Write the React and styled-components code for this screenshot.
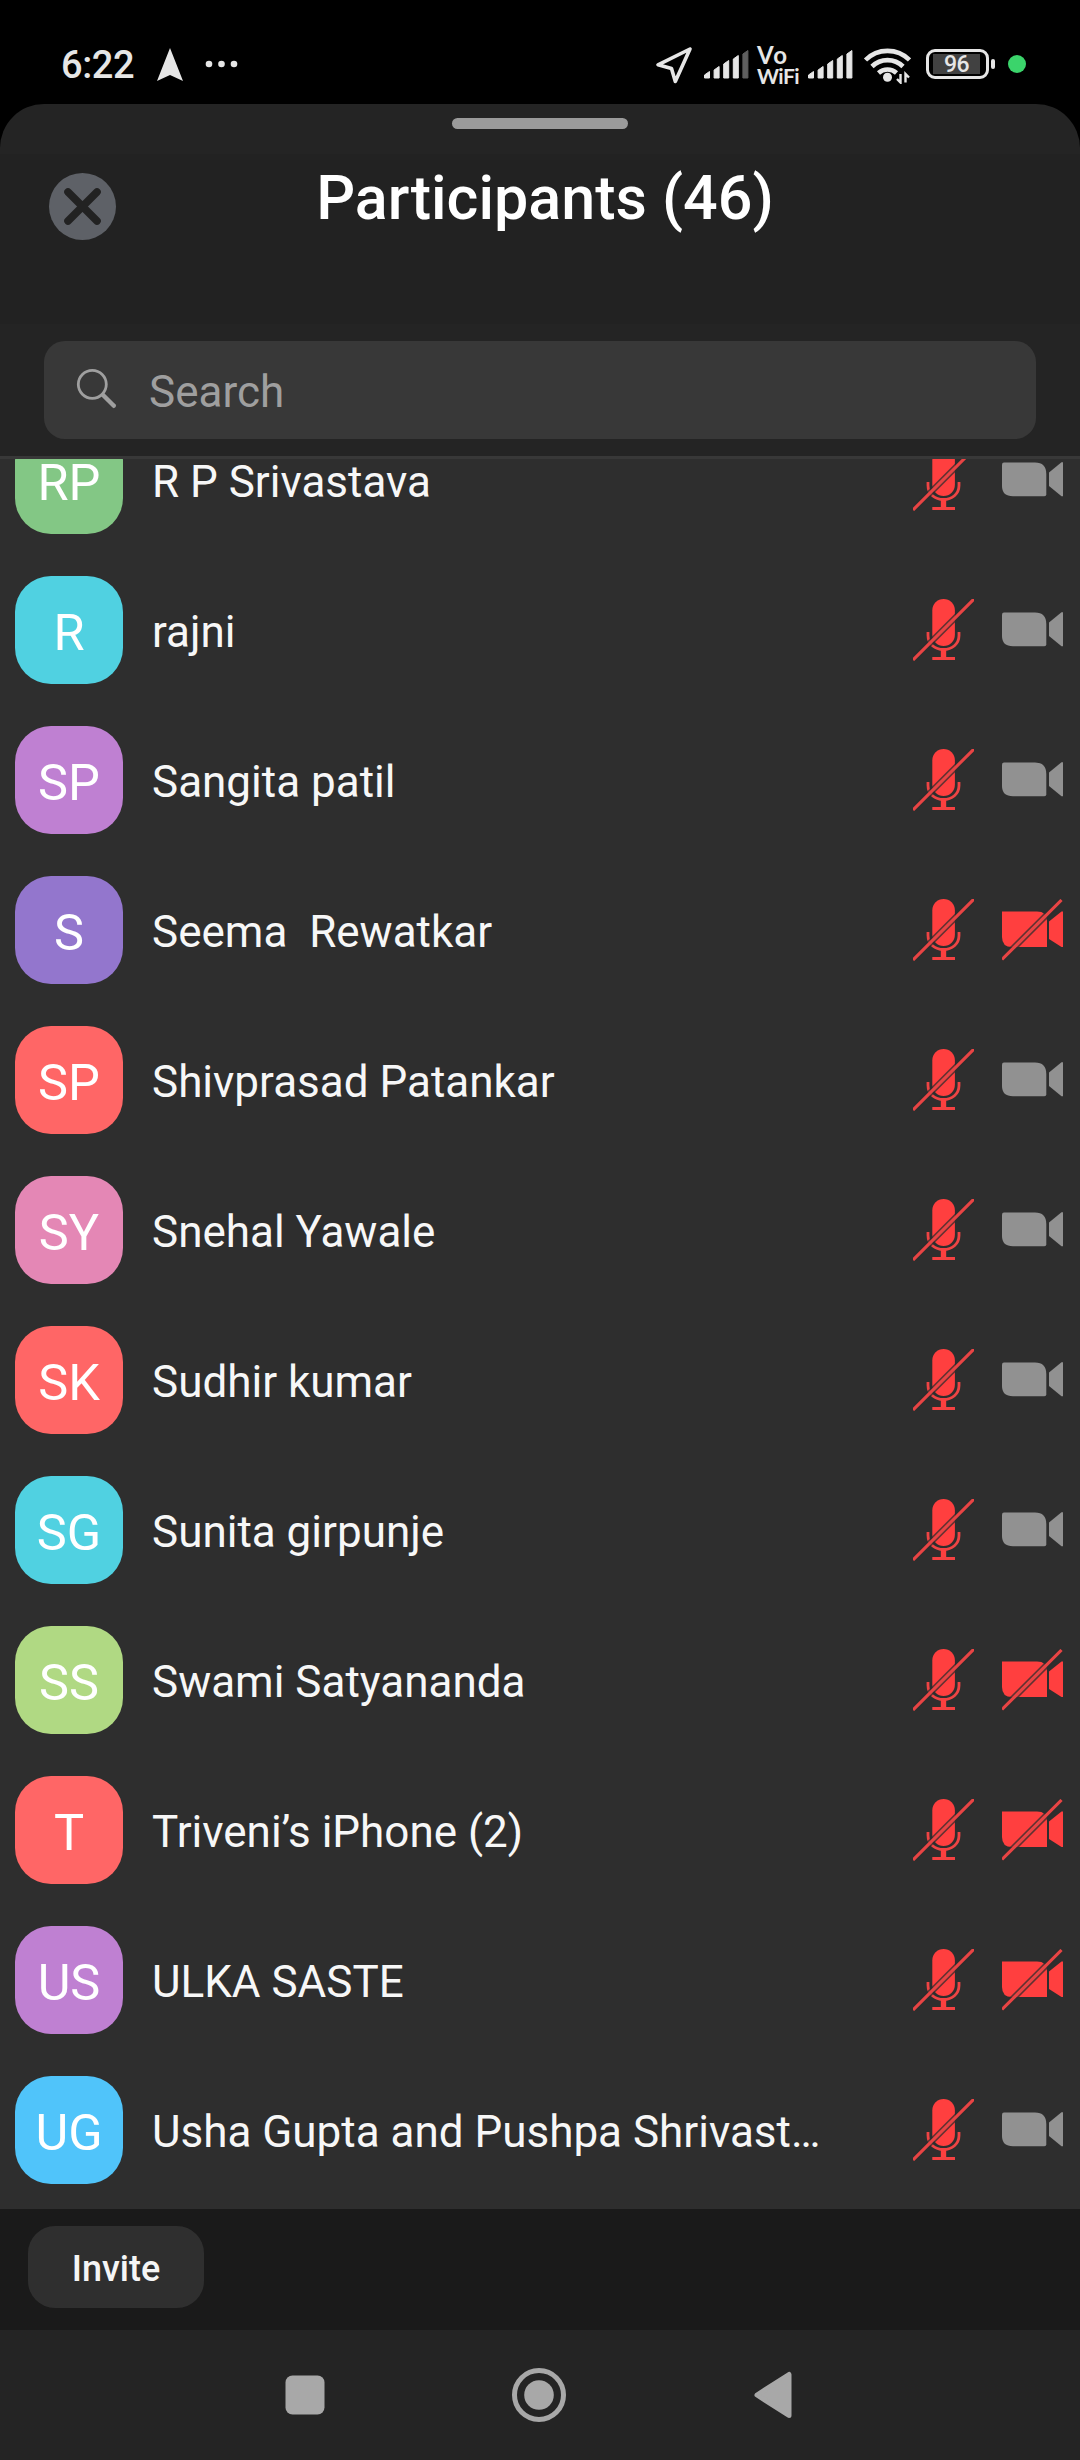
import React from "react";
import styled, { createGlobalStyle } from "styled-components";

const Global = createGlobalStyle`
  * { box-sizing: border-box; }
  html, body { margin: 0; padding: 0; background: #000; }
  body { font-family: Roboto, "Noto Sans", sans-serif; width: 1080px; }
`;

const Screen = styled.div`
  width: 1080px;
  height: 2460px;
  display: flex;
  flex-direction: column;
  overflow: hidden;
  background: #000;
`;

const StatusBar = styled.div`
  height: 104px;
  flex: none;
  display: flex;
  justify-content: space-between;
  padding: 44px 54px 0 61px;
  color: #e6e6e6;
`;

const StatusGroup = styled.div`
  display: flex;
  height: 40px;
  align-items: flex-start;
`;

const Clock = styled.span`
  font-size: 38px;
  line-height: 42px;
  font-weight: 500;
  letter-spacing: -0.4px;
  width: 96px;
`;

const StatusIcon = styled.svg`
  display: block;
  flex: none;
  margin-left: ${(p) => p.$gap || 0}px;
  margin-top: ${(p) => p.$drop || 0}px;
`;

const VoWifi = styled.div`
  display: flex;
  flex-direction: column;
  width: 43px;
  margin-left: 8px;
  font-family: Lato, Roboto, sans-serif;
  font-weight: 700;
`;

const VoWifiLine = styled.span`
  font-size: ${(p) => p.$size}px;
  line-height: 21px;
  letter-spacing: ${(p) => p.$tracking}px;
`;

const Battery = styled.div`
  width: 63px;
  height: 30px;
  margin: 5px 0 0 15px;
  padding: 2px;
  border: 3px solid #e6e6e6;
  border-radius: 9px;
  display: flex;
`;

const Charge = styled.div`
  width: 47px;
  margin-left: 2px;
  background: #414141;
  display: flex;
  align-items: center;
  justify-content: center;
  font-size: 23px;
  font-weight: 500;
  letter-spacing: -0.5px;
  line-height: 20px;
  padding: 2px 0 0 0;
`;

const BatteryTip = styled.div`
  width: 4px;
  height: 10px;
  margin: 15px 0 0 2px;
  border-radius: 2px;
  background: #e6e6e6;
`;

const PrivacyDot = styled.div`
  width: 18px;
  height: 18px;
  margin: 11px 0 0 13px;
  border-radius: 50%;
  background: #3bd46b;
`;

const Sheet = styled.section`
  flex: 1;
  min-height: 0;
  display: flex;
  flex-direction: column;
  border-radius: 44px 44px 0 0;
  overflow: hidden;
  background: #242424;
`;

const GrabArea = styled.div`
  height: 50px;
  flex: none;
  display: flex;
  justify-content: center;
  padding-top: 14px;
`;

const Grabber = styled.div`
  width: 176px;
  height: 11px;
  border-radius: 6px;
  background: #9b9b9b;
`;

const TitleBar = styled.header`
  height: 170px;
  flex: none;
  display: grid;
  grid-template-columns: 116px 1fr 116px;
  padding: 0 0 0 49px;
  background: #222222;
`;

const CloseButton = styled.button`
  width: 67px;
  height: 67px;
  margin: 19px 0 0;
  padding: 0;
  border: 0;
  background: none;
`;

const Title = styled.h1`
  margin: 8px 0 0;
  padding-right: 39px;
  text-align: center;
  font-size: 61px;
  line-height: 72px;
  font-weight: 500;
  color: #fff;
  white-space: nowrap;
`;

const SearchArea = styled.div`
  height: 135px;
  flex: none;
  padding: 17px 44px 0;
  border-bottom: 3px solid #383838;
`;

const SearchField = styled.div`
  height: 98px;
  display: flex;
  align-items: center;
  padding-left: 33px;
  border-radius: 21px;
  background: #383838;
  color: #9f9f9f;
  font-size: 44px;
`;

const SearchLabel = styled.span`
  padding: 4px 0 0 33px;
`;

const List = styled.ul`
  flex: 1;
  min-height: 0;
  margin: 0;
  padding: 0;
  list-style: none;
  overflow: hidden;
  background: #2e2e2e;

  & > li:first-child { margin-top: -54px; }
`;

const Row = styled.li`
  height: 150px;
  display: flex;
  align-items: center;
  padding: 0 17px 0 15px;
`;

const Avatar = styled.div`
  width: 108px;
  height: 108px;
  flex: none;
  display: flex;
  align-items: center;
  justify-content: center;
  padding: 5px 0 0 0;
  border-radius: 36px;
  background: ${(p) => p.$color};
  color: #fff;
  font-size: 50.5px;
`;

const Name = styled.span`
  flex: none;
  width: 700px;
  margin-left: 29px;
  padding-top: 3px;
  margin-right: 61px;
  font-size: 44px;
  line-height: 54px;
  color: #f7f7f7;
  white-space: pre;
`;

const RowIcon = styled.svg`
  display: block;
  flex: none;
  margin-right: ${(p) => p.$after || 0}px;
`;

const Footer = styled.footer`
  height: 121px;
  flex: none;
  padding: 17px 28px;
  background: #1a1a1a;
`;

const InviteButton = styled.button`
  width: 176px;
  height: 82px;
  padding: 3px 0 0;
  border: 0;
  border-radius: 27px;
  background: #2f2f2f;
  color: #f5f5f5;
  font: 500 36px Roboto, sans-serif;
`;

const NavBar = styled.nav`
  height: 130px;
  flex: none;
  display: flex;
  align-items: center;
  justify-content: space-between;
  padding: 0 280px 0 278px;
  background: #242424;
`;

const Glyph = styled.svg`
  display: block;
  overflow: visible;
`;

function Signal({ gap, drop, dimLast }) {
  const heights = [7, 12, 18, 23, 28];
  return (
    <StatusIcon $gap={gap} $drop={drop} width="45" height="29" viewBox="0 0 45 29">
      {heights.map((h, i) => {
        const x = i * 9.6;
        return (
          <path
            key={i}
            d={`M${x + 0.5} ${29 - h + 3}L${x + 5.5} ${29 - h - 0.5}V28H${x + 0.5}Z`}
            fill={dimLast && i === 4 ? "#5f5f5f" : "#e6e6e6"}
            stroke={dimLast && i === 4 ? "#5f5f5f" : "#e6e6e6"}
            strokeWidth="1"
            strokeLinejoin="round"
          />
        );
      })}
    </StatusIcon>
  );
}

function MicOff() {
  return (
    <RowIcon $after={28} width="61" height="62" viewBox="0 0 61 62">
      <rect x="19.3" y="0" width="22.6" height="47" rx="11.3" fill="#ff3f3f" />
      <path d="M15 33V36.5C15 45 22 50.5 30.5 50.5S46 45 46 36.5V33" fill="none" stroke="#ee4444" strokeWidth="2.8" />
      <path d="M30.5 51V59" stroke="#ff3f3f" strokeWidth="5.4" />
      <path d="M19.3 59.5H42" stroke="#f54141" strokeWidth="3" />
      <path d="M0 61L61 0" stroke="#2e2e2e" strokeOpacity="0.75" strokeWidth="6.2" />
      <path d="M0 61L61 0" stroke="#e84444" strokeWidth="3.1" />
    </RowIcon>
  );
}

function CameraOn() {
  return (
    <RowIcon width="61" height="62" viewBox="0 0 61 62">
      <path d="M2 13.5H33Q44.3 13.5 44.3 25V45.2Q44.3 47.2 42.3 47.2H11Q0 47.2 0 37V15.5Q0 13.5 2 13.5Z" fill="#919191" />
      <path d="M47 23.5L59.5 13.2H61V47.2H59.5L47 37Z" fill="#919191" />
    </RowIcon>
  );
}

function CameraOff() {
  return (
    <RowIcon width="61" height="62" viewBox="0 0 61 62">
      <path d="M0 12.5H35Q45 12.5 45 22V48H10Q0 48 0 38Z" fill="#ff3f3f" />
      <path d="M47 22.5L59.5 12.5H61V48H59.5L47 40Z" fill="#ff3f3f" />
      <path d="M0 60.5L60.5 0" stroke="#2e2e2e" strokeOpacity="0.75" strokeWidth="6.2" />
      <path d="M0 60.5L59.5 1" stroke="#e84444" strokeWidth="3.1" />
    </RowIcon>
  );
}

const participants = [
  { initials: "RP", name: "R P Srivastava", color: "#83c785", camera: true },
  { initials: "R", name: "rajni", color: "#50d1e1", camera: true },
  { initials: "SP", name: "Sangita patil", color: "#bf80d2", camera: true },
  { initials: "S", name: "Seema  Rewatkar", color: "#9376cd", camera: false },
  { initials: "SP", name: "Shivprasad Patankar", color: "#ff6666", camera: true },
  { initials: "SY", name: "Snehal Yawale", color: "#e487b5", camera: true },
  { initials: "SK", name: "Sudhir kumar", color: "#ff6666", camera: true },
  { initials: "SG", name: "Sunita girpunje", color: "#50d1e1", camera: true },
  { initials: "SS", name: "Swami Satyananda", color: "#b0d983", camera: false },
  { initials: "T", name: "Triveni’s iPhone (2)", color: "#ff6666", camera: false },
  { initials: "US", name: "ULKA SASTE", color: "#bf80d2", camera: false },
  { initials: "UG", name: "Usha Gupta and Pushpa Shrivast…", color: "#50c4fa", camera: true },
];

export default function App() {
  return (
    <Screen>
      <Global />
      <StatusBar>
        <StatusGroup>
          <Clock>6:22</Clock>
          <StatusIcon $drop={4} width="26" height="33" viewBox="0 0 26 33">
            <path d="M13 0L26 33L13 27L0 33Z" fill="#e6e6e6" />
          </StatusIcon>
          <StatusIcon $gap={22} $drop={16} width="34" height="8" viewBox="0 0 34 8">
            <circle cx="4" cy="4" r="3.3" fill="#e6e6e6" />
            <circle cx="16.5" cy="4" r="3.3" fill="#e6e6e6" />
            <circle cx="29" cy="4" r="3.3" fill="#e6e6e6" />
          </StatusIcon>
        </StatusGroup>
        <StatusGroup>
          <StatusIcon $drop={2} width="38" height="39" viewBox="0 0 38 39">
            <path d="M35 3L3 18.8L16.5 22.5L20.3 35.5Z" fill="none" stroke="#e6e6e6" strokeWidth="3.6" strokeLinejoin="round" />
          </StatusIcon>
          <Signal gap={11} drop={6} dimLast />
          <VoWifi>
            <VoWifiLine $size={24} $tracking={1.6}>Vo</VoWifiLine>
            <VoWifiLine $size={21} $tracking={-0.6}>WiFi</VoWifiLine>
          </VoWifi>
          <Signal gap={8} drop={6} />
          <StatusIcon $gap={10} $drop={4} width="48" height="36" viewBox="0 0 48 36">
            <g fill="none" stroke="#e6e6e6" strokeWidth="4.6">
              <path d="M2.5 12A31 31 0 0 1 46.5 12" />
              <path d="M9 18.5A22 22 0 0 1 40 18.5" />
              <path d="M15.5 25A13.5 13.5 0 0 1 33.5 25" />
            </g>
            <circle cx="24.5" cy="29.2" r="4.5" fill="#e6e6e6" />
            <path d="M37.5 26V34.5L34 31M42.5 34.5V26L46 29.5" fill="none" stroke="#e6e6e6" strokeWidth="2.4" />
          </StatusIcon>
          <Battery>
            <Charge>96</Charge>
          </Battery>
          <BatteryTip />
          <PrivacyDot />
        </StatusGroup>
      </StatusBar>
      <Sheet>
        <GrabArea>
          <Grabber />
        </GrabArea>
        <TitleBar>
          <CloseButton aria-label="Close">
            <Glyph width="67" height="67" viewBox="0 0 67 67">
              <circle cx="33.5" cy="33.5" r="33.5" fill="#5e6167" />
              <path d="M19 19L48 48M48 19L19 48" stroke="#222222" strokeWidth="7.6" strokeLinecap="round" />
            </Glyph>
          </CloseButton>
          <Title>Participants (46)</Title>
        </TitleBar>
        <SearchArea>
          <SearchField>
            <Glyph width="39" height="40" viewBox="0 0 39 40">
              <circle cx="15.3" cy="14.3" r="14" fill="none" stroke="#9f9f9f" strokeWidth="2.8" />
              <path d="M26 25L36.8 35.8" stroke="#9f9f9f" strokeWidth="4.4" strokeLinecap="round" />
            </Glyph>
            <SearchLabel>Search</SearchLabel>
          </SearchField>
        </SearchArea>
        <List>
          {participants.map((p) => (
            <Row key={p.name}>
              <Avatar $color={p.color}>{p.initials}</Avatar>
              <Name>{p.name}</Name>
              <MicOff />
              {p.camera ? <CameraOn /> : <CameraOff />}
            </Row>
          ))}
        </List>
        <Footer>
          <InviteButton>Invite</InviteButton>
        </Footer>
        <NavBar>
          <Glyph width="54" height="54" viewBox="0 0 54 54">
            <rect x="7.5" y="7.5" width="39" height="39" rx="7" fill="#a8a8a8" />
          </Glyph>
          <Glyph width="54" height="54" viewBox="0 0 54 54">
            <circle cx="27" cy="27" r="24.5" fill="none" stroke="#a8a8a8" strokeWidth="5" />
            <circle cx="27" cy="27" r="14.8" fill="#a8a8a8" />
          </Glyph>
          <Glyph width="54" height="54" viewBox="0 0 54 54">
            <path d="M11 27L43 6.5V47.5Z" fill="#a8a8a8" stroke="#a8a8a8" strokeWidth="5" strokeLinejoin="round" />
          </Glyph>
        </NavBar>
      </Sheet>
    </Screen>
  );
}
